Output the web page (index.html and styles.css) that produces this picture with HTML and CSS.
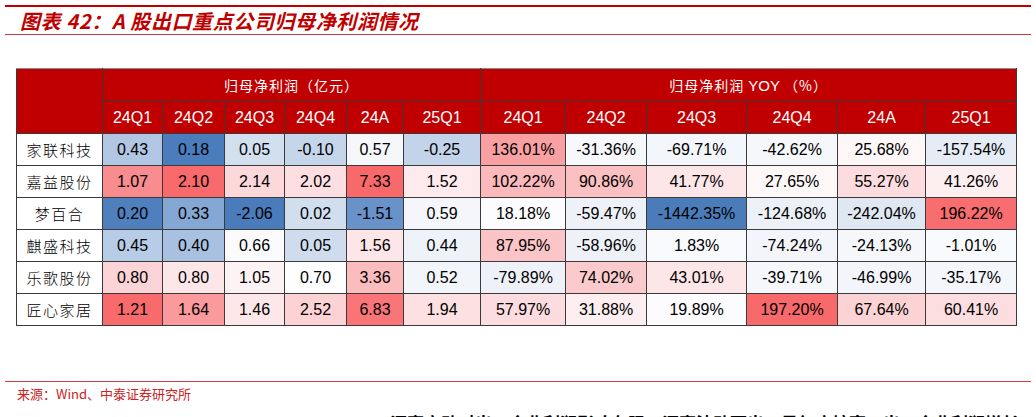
FILE: index.html
```html
<!DOCTYPE html>
<html lang="zh-CN">
<head>
  <meta charset="UTF-8">
  <title>图表 42：A 股出口重点公司归母净利润情况</title>
  <link rel="stylesheet" href="styles.css">
</head>
<body>
  <div class="chart-title">
    <h1>图表 42：A 股出口重点公司归母净利润情况</h1>
  </div>

  <div class="table-wrap">
    <table class="profit-table">
      <colgroup>
        <col style="width:86px">
        <col style="width:60px">
        <col style="width:62px">
        <col style="width:60px">
        <col style="width:62px">
        <col style="width:57px">
        <col style="width:77px">
        <col style="width:85px">
        <col style="width:81px">
        <col style="width:100px">
        <col style="width:91px">
        <col style="width:88px">
        <col style="width:91px">
      </colgroup>
      <thead>
        <tr class="head-top">
          <th rowspan="2" class="corner"></th>
          <th colspan="6" class="group">归母净利润（亿元）</th>
          <th colspan="6" class="group">归母净利润 <span class="latin">YOY</span> （%）</th>
        </tr>
        <tr class="head-sub">
          <th>24Q1</th><th>24Q2</th><th>24Q3</th><th>24Q4</th><th>24A</th><th>25Q1</th>
          <th>24Q1</th><th>24Q2</th><th>24Q3</th><th>24Q4</th><th>24A</th><th>25Q1</th>
        </tr>
      </thead>
      <tbody id="rows"></tbody>
    </table>
  </div>

  <div class="source">来源：Wind、中泰证券研究所</div>

  <p class="next-text"><span class="bullet">一</span>汇率变动对出口企业利润影响有限，汇率波动下出口景气度较高，出口企业利润增长</p>

  <script>
    // value, background colour (conditional formatting taken from the sheet)
    const rows = [
      { name: '家联科技', cells: [
        ['0.43', '#b0c6e2'], ['0.18', '#4b7dbc'], ['0.05', '#d2dfef'], ['-0.10', '#c5d5ea'], ['0.57', '#f5f7fb'], ['-0.25', '#c3d3ea'],
        ['136.01%', '#f9a0a2'], ['-31.36%', '#f6f8fc'], ['-69.71%', '#f3f6fb'], ['-42.62%', '#f5f7fb'], ['25.68%', '#fdf7f8'], ['-157.54%', '#e5ecf5'] ] },
      { name: '嘉益股份', cells: [
        ['1.07', '#f98c8e'], ['2.10', '#f86a6c'], ['2.14', '#fdd8db'], ['2.02', '#fddfe2'], ['7.33', '#f8696b'], ['1.52', '#fdeaec'],
        ['102.22%', '#fbb9bb'], ['90.86%', '#fbc0c2'], ['41.77%', '#fde6e8'], ['27.65%', '#fdf7f8'], ['55.27%', '#fcdcde'], ['41.26%', '#fdeef0'] ] },
      { name: '梦百合', cells: [
        ['0.20', '#4f7fbd'], ['0.33', '#84a8d3'], ['-2.06', '#4a7bbb'], ['0.02', '#d0deee'], ['-1.51', '#6892c9'], ['0.59', '#f4f6fb'],
        ['18.18%', '#fcfcff'], ['-59.47%', '#eef2f8'], ['-1442.35%', '#4a7cb9'], ['-124.68%', '#ecf0f7'], ['-242.04%', '#dee7f2'], ['196.22%', '#f86d6f'] ] },
      { name: '麒盛科技', cells: [
        ['0.45', '#b7cce6'], ['0.40', '#a9c1e0'], ['0.66', '#fbfbfd'], ['0.05', '#cfdcee'], ['1.56', '#fde5e8'], ['0.44', '#eef2f9'],
        ['87.95%', '#fbc4c6'], ['-58.96%', '#eef2f8'], ['1.83%', '#f9fafd'], ['-74.24%', '#f3f5fa'], ['-24.13%', '#f5f7fb'], ['-1.01%', '#f9fafd'] ] },
      { name: '乐歌股份', cells: [
        ['0.80', '#fcd3d6'], ['0.80', '#fde6e8'], ['1.05', '#fef3f4'], ['0.70', '#fefefe'], ['3.36', '#fbbcbe'], ['0.52', '#f2f5fa'],
        ['-79.89%', '#eef2f8'], ['74.02%', '#fbcacc'], ['43.01%', '#fde6e8'], ['-39.71%', '#f5f7fb'], ['-46.99%', '#f3f5fa'], ['-35.17%', '#f4f6fb'] ] },
      { name: '匠心家居', cells: [
        ['1.21', '#f86a6c'], ['1.64', '#fa9a9c'], ['1.46', '#fde7e9'], ['2.52', '#fcd2d5'], ['6.83', '#f97577'], ['1.94', '#fce0e2'],
        ['57.97%', '#fcdcdf'], ['31.88%', '#fdeef0'], ['19.89%', '#fcfcff'], ['197.20%', '#f8696b'], ['67.64%', '#fcd3d5'], ['60.41%', '#fcdee0'] ] }
    ];

    const body = document.getElementById('rows');
    rows.forEach(row => {
      const tr = document.createElement('tr');
      let html = `<td class="name">${row.name}</td>`;
      row.cells.forEach(c => {
        html += `<td style="background:${c[1]}">${c[0]}</td>`;
      });
      tr.innerHTML = html;
      body.appendChild(tr);
    });
  </script>
</body>
</html>
```

FILE: styles.css
```css
body {
  margin: 0;
  padding: 0;
  background: #ffffff;
  font-family: "Liberation Sans", Arial, "Noto Sans CJK SC", sans-serif;
  color: #000;
  overflow: hidden;
}
.chart-title {
  margin: 5px 5px 0;
  border-top: 2px solid #c00000;
  border-bottom: 1px solid #cc3a3a;
}
.chart-title h1 {
  margin: 0;
  padding: 0 0 0 15px;
  height: 27px;
  line-height: 27px;
  font-family: "Noto Sans CJK SC", sans-serif;
  font-size: 20px;
  font-weight: bold;
  font-style: italic;
  color: #c00000;
  letter-spacing: 0.6px;
}
.table-wrap {
  padding: 33px 0 0 16px;
}
.profit-table {
  border-collapse: collapse;
  table-layout: fixed;
  width: 1000px;
  font-size: 16px;
}
.profit-table th,
.profit-table td {
  border: 1px solid #3a3a3a;
  padding: 0;
  text-align: center;
  vertical-align: middle;
  white-space: nowrap;
}
.profit-table th {
  background: #c00000;
  color: #fff;
  font-weight: normal;
}
.head-top th {
  height: 32px;
  border-top-color: #8a8a8a;
}
.head-top th.group {
  font-family: "Noto Sans CJK SC", sans-serif;
  font-size: 14px;
  letter-spacing: 1px;
}
.head-top .latin {
  font-family: "Liberation Sans", Arial, sans-serif;
  font-size: 15px;
  letter-spacing: 0;
}
.head-sub th {
  height: 31px;
}
.profit-table td {
  height: 31px;
}
.profit-table td.name {
  background: #fff;
  font-family: "Noto Sans CJK SC", sans-serif;
  font-weight: 300;
  font-size: 15px;
  letter-spacing: 1.5px;
}
.source {
  margin: 55px 5px 0;
  border-top: 1px solid #e03c3c;
  padding: 4px 0 0 12px;
  height: 20px;
  line-height: 16px;
  font-family: "Noto Sans CJK SC", sans-serif;
  font-size: 13px;
  color: #cc2222;
}
.next-text {
  margin: 5px 0 0;
  padding-left: 345px;
  font-family: "Noto Sans CJK SC", sans-serif;
  font-size: 17px;
  font-weight: bold;
  line-height: 24px;
  white-space: nowrap;
}
.next-text .bullet {
  display: inline-block;
  width: 45px;
}
```
